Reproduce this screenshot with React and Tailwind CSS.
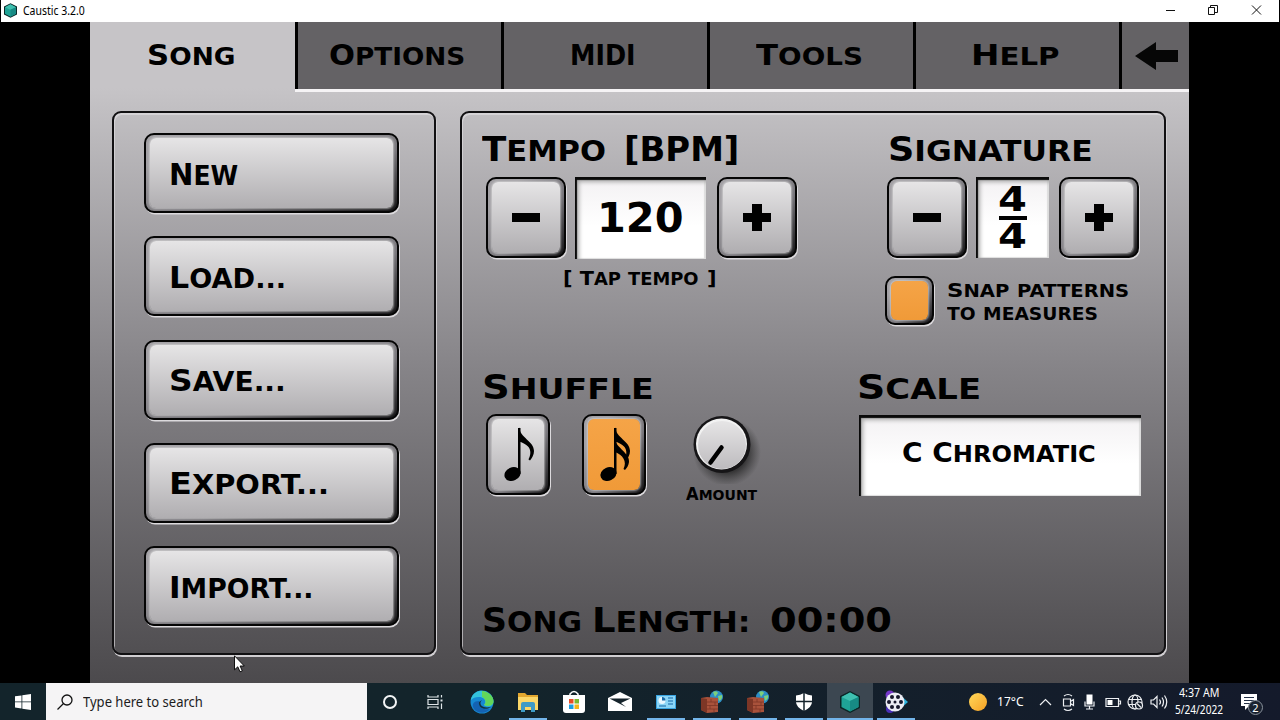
import { useLayoutEffect, useRef } from "react";

const tabs = [
  { text: "Options", width: "w-[136px]" },
  { text: "MIDI", width: "w-[66px]" },
  { text: "Tools", width: "w-[107px]" },
  { text: "Help", width: "w-[88px]" },
];

const songActions = [
  { text: "New", width: "w-[69px]" },
  { text: "Load...", width: "w-[117px]" },
  { text: "Save...", width: "w-[117px]" },
  { text: "Export...", width: "w-[160px]" },
  { text: "Import...", width: "w-[144px]" },
];

// Stretches its text horizontally to fill the width given in className
const Fit = ({ className, children }) => {
  const outer = useRef(null);
  const inner = useRef(null);

  useLayoutEffect(() => {
    const scale = outer.current.clientWidth / inner.current.offsetWidth;
    inner.current.style.transform = `scaleX(${scale})`;
  }, []);

  return (
    <div ref={outer} className={`shrink-0 whitespace-nowrap ${className}`}>
      <span ref={inner} className="inline-flex items-baseline origin-left">
        {children}
      </span>
    </div>
  );
};

const wordStyle = (word) => {
  if (!/[a-z]/.test(word)) return "inline-block";
  if (/^[A-Z]/.test(word))
    return "inline-block uppercase text-[0.86em] first-letter:text-[1.163em]";
  return "inline-block uppercase text-[0.86em]";
};

// Small-caps lettering used everywhere inside the app
const Label = ({ text, className }) => (
  <Fit
    className={`flex items-start font-['DejaVu_Sans'] font-bold leading-none text-black ${className}`}
  >
    {text.split(" ").map((word, i) => (
      <span key={i} className={`${wordStyle(word)} ${i > 0 ? "ml-[0.4em]" : ""}`}>
        {word}
      </span>
    ))}
  </Fit>
);

const Bevel = ({ className, face = "from-[#e6e5e6] to-[#b0aeb1]", children }) => (
  <div
    className={`shrink-0 rounded-[10px] border-2 border-[#050505] bg-linear-to-br from-[#a3a1a5] from-20% via-[#77757a] via-60% to-[#151416] pt-[3px] pr-[4px] pb-[3px] pl-[4px] shadow-[1px_1.5px_0_#dcdadd] ${className}`}
  >
    <div
      className={`flex h-full w-full items-center rounded-[6px] bg-linear-to-b shadow-[0_0_2px_1px_rgba(225,225,225,0.6)] ${face}`}
    >
      {children}
    </div>
  </div>
);

const Panel = ({ className, children }) => (
  <div
    className={`shrink-0 h-[544px] rounded-[9px] border-2 border-[#111012] shadow-[1px_2px_0_#d0ced1,inset_1px_2px_0_rgba(225,223,226,0.65)] ${className}`}
  >
    {children}
  </div>
);

const Display = ({ className, children }) => (
  <div
    className={`shrink-0 bg-linear-to-b from-[#f3f1f3] to-white to-60% shadow-[inset_2px_3px_1px_#0a0a0a,inset_4px_5px_4px_#aaa,inset_-2px_-1px_1px_#ddd] ${className}`}
  >
    {children}
  </div>
);

const Minus = () => <div className="mx-auto h-[9px] w-[28px] bg-black" />;

const Plus = () => (
  <svg className="mx-auto" width="28" height="28" viewBox="0 0 28 28">
    <path d="M9 0h10v9h9v9h-9v9H9v-9H0V9h9z" />
  </svg>
);

const Note = ({ double }) => (
  <svg className="mx-auto shrink-0" width="40" height="60" viewBox="0 0 40 60">
    <ellipse cx="14.5" cy="49" rx="8.300" ry="6.600" transform="rotate(-24 14.5 49)" />
    <path d="M20 3h2.500v46H20z" />
    <path d="M21 2c1 11 15 14 15 24 0 4-2 7-4 9.500l-1.500-1c3-6 4-14-9.500-18z" />
    {double && (
      <path d="M21 14c1 9 15 14 14 23-.3 3-2 6-4 8l-1.500-1c4-8-1-14-8.500-17z" />
    )}
  </svg>
);

const Knob = () => (
  <svg className="shrink-0" width="74" height="74" viewBox="0 0 74 74">
    <defs>
      <linearGradient id="knob" x1="0" y1="0" x2="0" y2="1">
        <stop offset="0" stopColor="#e6e5e6" />
        <stop offset="1" stopColor="#bdbbbe" />
      </linearGradient>
      <radialGradient id="knobShadow">
        <stop offset="0.6" stopColor="#222" stopOpacity="0.75" />
        <stop offset="1" stopColor="#333" stopOpacity="0" />
      </radialGradient>
    </defs>
    <circle cx="40" cy="42" r="34" fill="url(#knobShadow)" />
    <circle cx="35" cy="34.500" r="28.500" fill="#161517" />
    <circle cx="34.500" cy="34" r="25.500" fill="#f2f2f2" />
    <circle cx="35" cy="35" r="24" fill="url(#knob)" />
    <path d="M34.500 37.500 23.500 52.500" stroke="#000" strokeWidth="4.500" strokeLinecap="round" />
  </svg>
);

const Hexagon = ({ className }) => (
  <svg className={className} viewBox="0 0 20 22">
    <path d="M10 0 20 5v12l-10 5L0 17V5z" fill="#0b2626" />
    <path d="M10 1.500 18.500 6v10L10 20.500 1.500 16V6z" fill="#1fa396" />
    <path d="M10 1.500 18.500 6 10 10 1.500 6z" fill="#3fc0b0" />
    <path d="M10 10l8.500-4v10L10 20.500z" fill="#178a84" />
  </svg>
);

const TitleBar = () => (
  <div className="flex h-[22px] items-center border-x border-black bg-white pr-[17px] pb-px pl-[3px]">
    <Hexagon className="h-[15px] w-[13px]" />
    <Fit className="ml-[6px] w-[62px] font-['Noto_Sans'] text-[12px] leading-none text-black">
      Caustic 3.2.0
    </Fit>
    <svg className="ml-auto" width="96" height="12" viewBox="0 0 96 12" fill="none" stroke="#111">
      <path d="M0 5.500h9" />
      <path d="M42.500 2.500h6v7h-6zM44.500 2v-1.500h7v7H49" />
      <path d="M86 .500l9 9M95 .500l-9 9" />
    </svg>
  </div>
);

const Tabs = () => (
  <div className="flex h-[70px]">
    <div className="flex w-[205px] shrink-0 pt-[19px] pl-[57px]">
      <Label text="Song" className="w-[88px] text-[29px]" />
    </div>
    <div className="flex flex-1 border-b-[3px] border-[#f5f3f5]">
      {tabs.map((tab) => (
        <div
          key={tab.text}
          className="flex w-[206px] shrink-0 justify-center border-l-[3px] border-black bg-[#646265] pt-[19px] pr-[5px]"
        >
          <Label text={tab.text} className={`text-[29px] ${tab.width}`} />
        </div>
      ))}
      <div className="flex flex-1 border-l-[3px] border-black bg-[#646265] pt-[20px] pl-[13px]">
        <svg width="43" height="28" viewBox="0 0 43 28">
          <path d="M0 14 21 0v8h22v12H21v8z" fill="#060606" />
        </svg>
      </div>
    </div>
  </div>
);

const SongPanel = () => (
  <Panel className="flex w-[324px] flex-col gap-[23.3px] pt-[20px] pl-[30px]">
    {songActions.map((action) => (
      <Bevel key={action.text} className="h-[80px] w-[255px]">
        <Label text={action.text} className={`mt-[3px] ml-[19px] text-[30px] ${action.width}`} />
      </Bevel>
    ))}
  </Panel>
);

const Tempo = () => (
  <div className="w-[403px]">
    <div className="flex">
      <Label text="Tempo" className="w-[124px] text-[33px]" />
      <Label text="[BPM]" className="ml-[18px] w-[115px] text-[33px]" />
    </div>
    <div className="mt-[11px] flex pl-[4px]">
      <Bevel className="h-[81px] w-[80px]">
        <Minus />
      </Bevel>
      <Display className="ml-[9px] flex h-[82px] w-[131px] justify-center pt-[21px]">
        <Label text="120" className="w-[87px] text-[40px]" />
      </Display>
      <Bevel className="ml-[11px] h-[81px] w-[80px]">
        <Plus />
      </Bevel>
    </div>
    <Label text="[ Tap tempo ]" className="mt-[9px] ml-[81px] w-[153px] text-[20px]" />
  </div>
);

const Signature = () => (
  <div>
    <Label text="Signature" className="ml-[3px] w-[205px] text-[33px]" />
    <div className="mt-[11px] flex pl-[2px]">
      <Bevel className="h-[81px] w-[80px]">
        <Minus />
      </Bevel>
      <Display className="ml-[9px] flex h-[81px] w-[73px] flex-col items-center pt-[6px]">
        <Label text="4" className="w-[29px] text-[33px]" />
        <div className="h-[4px] w-[28px] shrink-0 bg-black" />
        <Label text="4" className="w-[29px] text-[33px]" />
      </Display>
      <Bevel className="ml-[10px] h-[81px] w-[80px]">
        <Plus />
      </Bevel>
    </div>
    <div className="mt-[18px] flex">
      <Bevel className="h-[49px] w-[49px]" face="from-[#f5a447] to-[#f09a38]" />
      <div className="ml-[13px] pt-[4px]">
        <Label text="Snap patterns" className="w-[182px] text-[20px]" />
        <Label text="to measures" className="mt-[5px] w-[151px] text-[20px]" />
      </div>
    </div>
  </div>
);

const Shuffle = () => (
  <div className="w-[375px]">
    <Label text="Shuffle" className="w-[172px] text-[33px]" />
    <div className="mt-[10px] flex pl-[4px]">
      <Bevel className="h-[81px] w-[64px]">
        <Note />
      </Bevel>
      <Bevel className="ml-[32px] h-[81px] w-[64px]" face="from-[#f5a447] to-[#f09a38]">
        <Note double />
      </Bevel>
      <div className="-mt-[4px] ml-[41px]">
        <Knob />
        <Label text="Amount" className="mt-[2px] -ml-px w-[71px] text-[17px]" />
      </div>
    </div>
  </div>
);

const Scale = () => (
  <div>
    <Label text="Scale" className="w-[124px] text-[33px]" />
    <Display className="mt-[11px] ml-[2px] flex h-[81px] w-[282px] pt-[24px] pl-[43px]">
      <Label text="C Chromatic" className="w-[194px] text-[27px]" />
    </Display>
  </div>
);

const SettingsPanel = () => (
  <Panel className="w-[706px] pt-[20px] pl-[20px]">
    <div className="flex h-[238px]">
      <Tempo />
      <Signature />
    </div>
    <div className="flex h-[233px]">
      <Shuffle />
      <Scale />
    </div>
    <div className="flex">
      <Label text="Song" className="w-[100px] text-[33px]" />
      <Label text="Length:" className="ml-[10px] w-[158px] text-[33px]" />
      <Label text="00:00" className="ml-[20px] w-[122px] text-[33px]" />
    </div>
  </Panel>
);

/* Taskbar */

const EdgeIcon = () => (
  <svg width="24" height="24" viewBox="0 0 24 24">
    <circle cx="12" cy="12" r="11.500" fill="#1689d2" />
    <path d="M1 9C4 0 13-1 18 3c5 3 7 9 4 12-2 2-6 2-8 0 3-3 1-8-5-8-4 0-6 1-8 3z" fill="#34c3dc" />
    <path d="M12 1c6 0 12 5 11.500 11-.5 4-6 5-9.500 3 3-3 1-7-2-8z" fill="#62d65a" />
    <path d="M9 11c-1 7 5 9 11 8-4 5-12 5-16 0-3-5 0-8 5-8z" fill="#1462b2" />
    <path d="M12 10c-4 4 0 9 9 7-6 4-13 1-12-5z" fill="#12313f" />
  </svg>
);

const FolderIcon = () => (
  <svg width="22" height="20" viewBox="0 0 22 20">
    <path d="M1 1h7l2 2h11v15H1z" fill="#e2a72f" />
    <path d="M1 5h20v13H1z" fill="#fbd768" />
    <path d="M4 12q0-2 2-2h10q2 0 2 2v8h-4v-5H8v5H4z" fill="#3e9bc6" />
  </svg>
);

const StoreIcon = () => (
  <svg width="24" height="24" viewBox="0 0 24 24">
    <path d="M8 7V4q4-5 8 0v3" fill="none" stroke="#fff" strokeWidth="1.500" />
    <path d="M1 5h22v15q0 3-3 3H4q-3 0-3-3z" fill="#fff" />
    <path d="M7 9h4.500v4.500H7z" fill="#e84c26" />
    <path d="M12.500 9H17v4.500h-4.500z" fill="#7cb82f" />
    <path d="M7 14.500h4.500V19H7z" fill="#1c9ee0" />
    <path d="M12.500 14.500H17V19h-4.500z" fill="#f5b51b" />
  </svg>
);

const MailIcon = () => (
  <svg width="24" height="20" viewBox="0 0 24 20">
    <path d="M0 6 12 0l12 6v13H0z" fill="#fff" />
    <path d="M1.500 6.500h21L13 11l5 4z" fill="#15232b" />
  </svg>
);

const CardIcon = () => (
  <svg width="20" height="16" viewBox="0 0 20 16">
    <path d="M0 1h20v14H0z" fill="#3aa5e2" />
    <path d="M1 2h18v12H1z" fill="#8bd5f6" />
    <circle cx="6" cy="6.500" r="3.500" fill="#e9f7ff" />
    <path d="M6 6.500V3a3.500 3.500 0 0 1 3.500 3.500z" fill="#1767a5" />
    <path d="M12 4h5M12 7h5M12 10h5M3 12h7" stroke="#1767a5" strokeWidth="1.200" />
  </svg>
);

const FirewallIcon = () => (
  <svg width="24" height="24" viewBox="0 0 24 24">
    <circle cx="16.500" cy="7" r="6.500" fill="#2d8fc8" />
    <path d="M13 2q4-2 5 1l-3 4zM18 6l4-1q1 4-3 6z" fill="#7ed07a" />
    <path d="M1 8l6-1 11 1v14l-11 1-6-3z" fill="#a9523b" />
    <path d="M1 8l6 1v14l-6-3z" fill="#7d3626" />
    <path d="M7 12h11M7 15.500h11M7 19h11M11 9v3M15 12v3.500M10 15.500V19M14 19v3.500" stroke="#7d3626" strokeWidth="0.800" />
  </svg>
);

const ShieldIcon = () => (
  <svg width="18" height="20" viewBox="0 0 18 20">
    <path d="M9 1q4 2 8 2.500V10q0 5-8 9-8-4-8-9V3.500Q5 3 9 1z" fill="#fff" />
    <path d="M9 1v18M1 9.500h16" stroke="#15232b" strokeWidth="1.500" />
  </svg>
);

const ReelIcon = () => (
  <svg width="24" height="24" viewBox="0 0 24 24">
    <path d="M15 4l9 8-9 8z" fill="#2cb2dc" />
    <circle cx="6" cy="5" r="4.500" fill="#7436c8" />
    <circle cx="6" cy="19" r="4" fill="#4930b8" />
    <circle cx="11" cy="12" r="9.500" fill="#ececf4" />
    <g fill="#17172c">
      <circle cx="8" cy="7" r="2" />
      <circle cx="14" cy="7" r="2" />
      <circle cx="5" cy="12" r="2" />
      <circle cx="17" cy="12" r="2" />
      <circle cx="8" cy="17" r="2" />
      <circle cx="14" cy="17" r="2" />
      <circle cx="11" cy="12" r="1.500" />
    </g>
  </svg>
);

const apps = [
  { name: "edge", icon: <EdgeIcon /> },
  { name: "explorer", icon: <FolderIcon />, open: true },
  { name: "store", icon: <StoreIcon /> },
  { name: "mail", icon: <MailIcon /> },
  { name: "card", icon: <CardIcon />, open: true },
  { name: "firewall", icon: <FirewallIcon />, open: true },
  { name: "firewall-2", icon: <FirewallIcon />, open: true },
  { name: "security", icon: <ShieldIcon />, open: true },
  { name: "caustic", icon: <Hexagon className="h-[22px] w-[20px]" />, open: true, active: true },
  { name: "reel", icon: <ReelIcon />, open: true },
];

const Tray = () => (
  <svg width="132" height="20" viewBox="0 0 132 20" fill="none" stroke="#eef0f3" strokeWidth="1.200">
    <path d="M1 13l5.500-5.500L12 13" />
    <path d="M24.500 7h7v7h-7zM31.500 9.500l3-2v6l-3-2M25 4q4-3 8 0M25 17q4 3 8 0" />
    <path d="M48.500 3.500h4v8h-4z" fill="#fff" stroke="#fff" strokeWidth="2" />
    <path d="M46 9.500v4.500h9V9.500M50.500 14v3M47 17h7" />
    <path d="M67 6.500h12.500v8H67zM80 9h1.500v3H80" />
    <path d="M68.500 8h5v5h-5z" fill="#fff" stroke="none" />
    <circle cx="96" cy="10" r="7" />
    <ellipse cx="96" cy="10" rx="3" ry="7" />
    <path d="M89.500 7.500h13M89.500 12.500h7" />
    <circle cx="100" cy="13.500" r="3.500" fill="#141d2b" />
    <path d="M98 11.500l4 4" />
    <path d="M112 8h2.500l3.500-3.500v11L114.500 12H112zM120.500 7.500q2 2.500 0 5M123 5.500q3 4.500 0 9M125.500 3.500q4.500 6.500 0 13" />
  </svg>
);

const Taskbar = () => (
  <div className="flex h-[37px] items-stretch bg-linear-to-r from-[#13242b] from-40% to-[#141a2b] font-['Noto_Sans']">
    <div className="flex w-[46px] shrink-0 items-center justify-center">
      <svg width="16" height="16" viewBox="0 0 16 16" fill="#fff">
        <path d="M0 2.300l6.500-.9v6.100H0zM7.300 1.300 16 0v7.500H7.300zM0 8.300h6.500v6.200L0 13.600zM7.300 8.300H16V16l-8.700-1.300z" />
      </svg>
    </div>
    <div className="flex w-[321px] shrink-0 items-center bg-[#f5f4f5] pl-[11px]">
      <svg width="16" height="16" viewBox="0 0 16 16" fill="none" stroke="#111" strokeWidth="1.300">
        <circle cx="10" cy="6" r="5" />
        <path d="M6.500 9.500.500 15.500" />
      </svg>
      <Fit className="ml-[10px] w-[120px] text-[14px] leading-none text-[#1c1c1c]">
        Type here to search
      </Fit>
    </div>
    <div className="flex w-[46px] shrink-0 items-center justify-center">
      <div className="h-[14px] w-[14px] rounded-full border-2 border-[#f2f4f5]" />
    </div>
    <div className="flex w-[46px] shrink-0 items-center justify-center pr-[2px]">
      <svg width="17" height="16" viewBox="0 0 17 16" fill="none" stroke="#dfe5e8" strokeWidth="1.200">
        <path d="M1 1v2h10V1M1 5.500h10v5H1zM1 15v-2h10v2M14.500 1v2.500M14.500 9.500V15" />
        <path d="M13.500 5.500h2v2h-2z" fill="#dfe5e8" stroke="none" />
      </svg>
    </div>
    {apps.map((app) => (
      <div
        key={app.name}
        className={`flex w-[46px] shrink-0 flex-col items-center ${app.active ? "bg-[#3c4751]" : ""}`}
      >
        <div className="flex h-[35px] items-center pt-[2px]">{app.icon}</div>
        {app.open && (
          <div className={`h-[2px] bg-[#73b5ea] ${app.active ? "w-[46px]" : "w-[38px]"}`} />
        )}
      </div>
    ))}
    <div className="ml-[50px] flex items-center">
      <div className="h-[18px] w-[18px] rounded-full bg-linear-to-br from-[#ffd95a] to-[#f5a01f]" />
      <Fit className="ml-[10px] w-[27px] text-[13px] leading-none text-white">17°C</Fit>
    </div>
    <div className="ml-[15px] flex items-center">
      <Tray />
    </div>
    <div className="ml-[3px] flex w-[50px] shrink-0 flex-col items-center pt-px">
      <Fit className="w-[40px] text-[12px] leading-[17px] text-white">4:37 AM</Fit>
      <Fit className="w-[48px] text-[12px] leading-[17px] text-white">5/24/2022</Fit>
    </div>
    <div className="relative ml-[17px] h-[37px] w-[24px] pt-[11px]">
      <svg width="17" height="16" viewBox="0 0 17 16">
        <path d="M0 0h16v12H8l-4 4v-4H0z" fill="#fff" />
        <path d="M3 3.500h10M3 6.500h10M3 9.500h6" stroke="#243047" />
      </svg>
      <div className="absolute top-[17px] left-[7px] flex h-[15px] w-[15px] items-center justify-center rounded-full border border-[#8a929c] bg-[#1a2230] text-[11px] leading-none text-white">
        2
      </div>
    </div>
  </div>
);

const App = () => {
  return (
    <div className="relative flex h-[720px] w-[1280px] flex-col overflow-hidden bg-black">
      <TitleBar />
      <div className="ml-[90px] h-[661px] w-[1099px] bg-linear-to-b from-[#c6c4c7] from-10% via-[#858387] via-53% to-[#4c4a4d] to-100%">
        <Tabs />
        <div className="flex gap-[24px] pt-[19px] pl-[22px]">
          <SongPanel />
          <SettingsPanel />
        </div>
      </div>
      <Taskbar />

      {/* Mouse pointer */}
      <svg className="absolute top-[655px] left-[234px]" width="11" height="18" viewBox="0 0 11 18">
        <path d="M.500.800v14l3.300-3 2.200 5 2.300-1-2.200-4.800h4.200z" fill="#fff" stroke="#000" strokeWidth="0.900" />
      </svg>
    </div>
  );
};

export default App;
